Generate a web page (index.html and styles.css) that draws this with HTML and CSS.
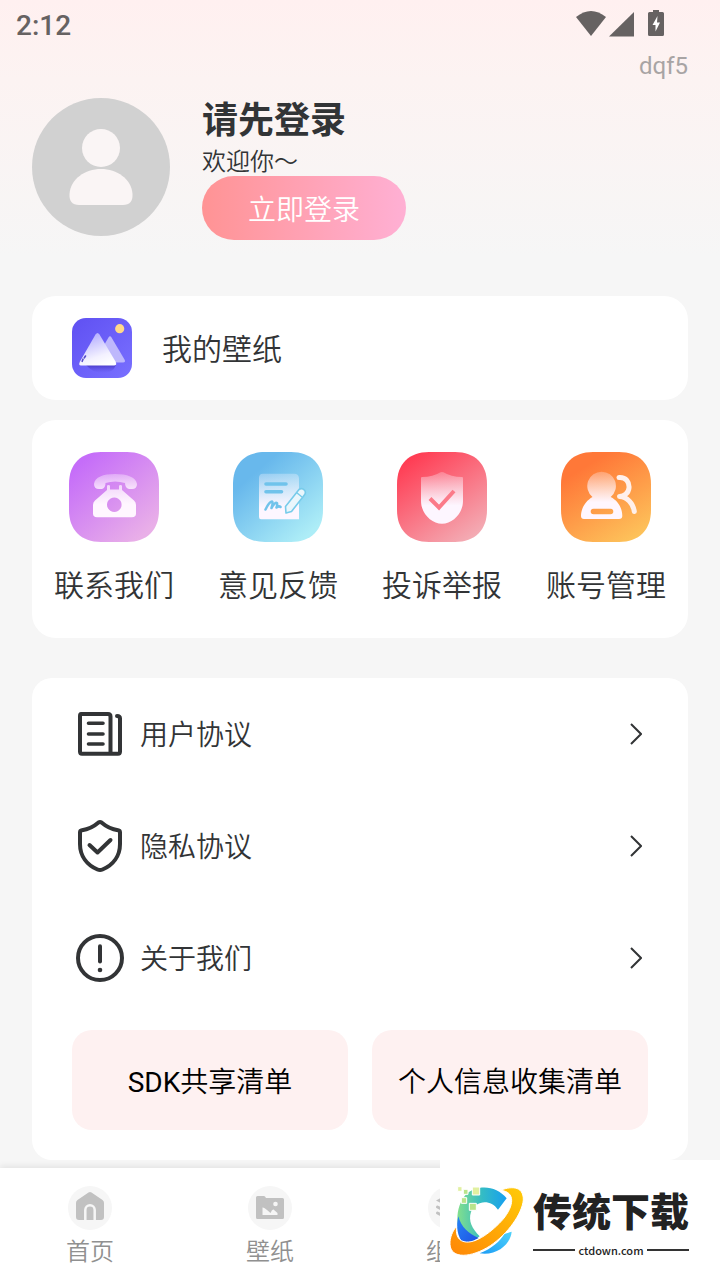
FILE: index.html
```html
<!DOCTYPE html>
<html lang="zh-CN">
<head>
<meta charset="utf-8">
<meta name="viewport" content="width=device-width, initial-scale=1">
<title>我的</title>
<link rel="stylesheet" href="styles.css">
</head>
<body>
<div class="page">
  <header class="status">
    <span class="clock">2:12</span>
    <svg class="status-icons" viewBox="0 0 92 30" aria-hidden="true" fill="#666262">
      <path d="M0 7Q15-5 30 7L15 26Z"/>
      <path d="M33 26.500L58 2V26.500Z"/>
      <path d="M77 0h6v2h3.500q1.500 0 1.500 1.500v21q0 1.500-1.500 1.500h-13q-1.500 0-1.500-1.500v-21Q72 2 73.500 2H77Z"/>
      <path fill="#fff" d="M81.500 6L76.500 15H79.500V21.500L84 12.500H81Z"/>
    </svg>
  </header>
  <p class="user-code">dqf5</p>

  <section class="profile">
    <svg class="avatar" viewBox="0 0 138 138" role="img" aria-label="头像">
      <circle cx="69" cy="69" r="69" fill="#d1d1d1"/>
      <circle cx="69" cy="50" r="19" fill="#faf5f5"/>
      <path fill="#faf5f5" d="M37.500 96C38.500 81 53 71 69 71S99.500 81 100.500 96Q101 107 91 107H47Q37 107 37.500 96Z"/>
    </svg>
    <div class="profile-text">
      <h1 class="profile-title">请先登录</h1>
      <p class="profile-sub">欢迎你～</p>
      <button class="login" type="button">立即登录</button>
    </div>
  </section>

  <main class="content">
    <a class="card wallpaper" href="#wallpaper">
      <svg class="wallpaper-icon" viewBox="0 0 60 60" aria-hidden="true">
        <defs>
          <linearGradient id="wp-bg" x1="0" y1="0" x2="1" y2="1"><stop offset="0" stop-color="#5f50f2"/><stop offset="1" stop-color="#7970ff"/></linearGradient>
          <linearGradient id="wp-big" x1="0.300" y1="0" x2="0.700" y2="1"><stop offset="0" stop-color="#b0a9ff"/><stop offset="0.700" stop-color="#f3f1ff"/><stop offset="1" stop-color="#fff"/></linearGradient>
          <linearGradient id="wp-shade" x1="0" y1="0" x2="0" y2="1"><stop offset="0" stop-color="#3929b5" stop-opacity="0.700"/><stop offset="1" stop-color="#5a4ddc" stop-opacity="0"/></linearGradient>
        </defs>
        <rect width="60" height="60" rx="14" fill="url(#wp-bg)"/>
        <path d="M14 47H44Q41 55 31 55T14 47Z" fill="url(#wp-shade)"/>
        <path d="M36.500 19.500Q38 17 39.500 19.500L52.500 41.500Q54 44.500 51 44.500H26Q22 44.500 24 41Z" fill="#beb8fc"/>
        <path d="M23.500 16.500Q25.500 13.500 27.500 16.500L43.500 43.500Q45.500 47.500 42 47.500H9Q6 47.500 8 43.500Z" fill="url(#wp-big)"/>
        <path d="M10.200 43.300L11 41.200M12.300 39.800L13.500 38" stroke="#5549c8" stroke-width="1.600" stroke-linecap="round"/>
        <circle cx="47.700" cy="10.700" r="4.600" fill="#ffd98a"/>
      </svg>
      <span class="wallpaper-label">我的壁纸</span>
    </a>

    <nav class="card shortcuts" aria-label="服务">
      <a class="shortcut" href="#contact">
        <svg class="shortcut-icon" viewBox="0 0 90 90" aria-hidden="true">
          <defs>
            <linearGradient id="c-bg" x1="0.150" y1="0.100" x2="0.850" y2="0.900"><stop offset="0" stop-color="#c56df9"/><stop offset="1" stop-color="#e9afe8"/></linearGradient>
            <linearGradient id="c-top" x1="0" y1="0" x2="0" y2="1"><stop offset="0" stop-color="#fff6ff" stop-opacity="0.350"/><stop offset="1" stop-color="#fff6ff" stop-opacity="0.800"/></linearGradient>
            <linearGradient id="c-body" x1="0" y1="0" x2="0" y2="1"><stop offset="0" stop-color="#fff6ff" stop-opacity="0.700"/><stop offset="0.600" stop-color="#fff6ff"/></linearGradient>
          </defs>
          <path fill="url(#c-bg)" d="M32 0H58C78 0 90 12 90 32V58C90 78 78 90 58 90H32C12 90 0 78 0 58V32C0 12 12 0 32 0Z"/>
          <path fill="url(#c-top)" d="M46 22C58 22 67 25 68 32Q68 37 63 37H60Q56 36 56 31Q46 28 36.500 31Q36.500 36 33 37H30Q25 37 25 32C26 25 34 22 46 22Z"/>
          <path fill="url(#c-body)" fill-rule="evenodd" d="M38 34Q38 33 39.500 33T41 34V37.500H50V34Q50 33 51.500 33T53 34V38L65 48.500Q67 50 67 53V61.500Q67 65.300 63 65.300H28Q24 65.300 24 61.500V53Q24 50 26 48.500L38 38ZM45.300 45.400a7.300 7.300 0 1 0 .01 0Z"/>
        </svg>
        <span>联系我们</span>
      </a>
      <a class="shortcut" href="#feedback">
        <svg class="shortcut-icon" viewBox="0 0 90 90" aria-hidden="true">
          <defs>
            <linearGradient id="f-bg" x1="0.150" y1="0.100" x2="0.850" y2="0.900"><stop offset="0.150" stop-color="#68b8ec"/><stop offset="1" stop-color="#adedf7"/></linearGradient>
            <linearGradient id="f-paper" x1="0" y1="0" x2="0" y2="1"><stop offset="0" stop-color="#fdf6ff" stop-opacity="0.300"/><stop offset="0.750" stop-color="#fdf6ff"/></linearGradient>
          </defs>
          <path fill="url(#f-bg)" d="M32 0H58C78 0 90 12 90 32V58C90 78 78 90 58 90H32C12 90 0 78 0 58V32C0 12 12 0 32 0Z"/>
          <path fill="url(#f-paper)" d="M30 21.700H61Q66 21.700 66 26.500V67.200H28Q26 67.200 26 65V26Q26 21.700 30 21.700Z"/>
          <g fill="none" stroke="#70c3eb" stroke-linecap="round" stroke-linejoin="round">
            <path stroke-width="3.600" d="M33 32H53M33 39.700H48.500"/>
            <path stroke-width="2.500" d="M32.500 57.500Q36 50 39 49.500Q40.500 50 38.500 56Q42 50 44 51Q44.500 53 43.500 55.500Q46 53.500 47.500 55"/>
          </g>
          <path fill="#eaf6fc" stroke="#77cbea" stroke-width="1.600" stroke-linejoin="round" d="M52.500 54.500L66 37.500Q69 35.500 71.500 38.200Q73.500 40.500 71 43.500L58.500 59.500L53 61Z"/>
          <path fill="none" stroke="#77cbea" stroke-width="1.400" d="M63.500 40.500L69 45"/>
        </svg>
        <span>意见反馈</span>
      </a>
      <a class="shortcut" href="#report">
        <svg class="shortcut-icon" viewBox="0 0 90 90" aria-hidden="true">
          <defs>
            <linearGradient id="r-bg" x1="0.150" y1="0" x2="0.850" y2="1"><stop offset="0.050" stop-color="#ff3d54"/><stop offset="1" stop-color="#f3b0b8"/></linearGradient>
            <linearGradient id="r-shield" x1="0" y1="0" x2="0" y2="1"><stop offset="0" stop-color="#fdf4ff" stop-opacity="0.250"/><stop offset="0.650" stop-color="#fdf6ff"/></linearGradient>
          </defs>
          <path fill="url(#r-bg)" d="M32 0H58C78 0 90 12 90 32V58C90 78 78 90 58 90H32C12 90 0 78 0 58V32C0 12 12 0 32 0Z"/>
          <path fill="url(#r-shield)" d="M43.500 20.300Q45 19.500 46.500 20.300Q54 25 65 25Q66 25 66 26V49C66 61 56 71.700 45 71.700S24 61 24 49V26Q24 25 25 25Q36 25 43.500 20.300Z"/>
          <path fill="none" stroke="#fb7a89" stroke-width="4" d="M33 46.500L42 55.500L57 39"/>
        </svg>
        <span>投诉举报</span>
      </a>
      <a class="shortcut" href="#account">
        <svg class="shortcut-icon" viewBox="0 0 90 90" aria-hidden="true">
          <defs>
            <linearGradient id="a-bg" x1="0.200" y1="0" x2="0.800" y2="1"><stop offset="0.150" stop-color="#ff7838"/><stop offset="1" stop-color="#fdc45b"/></linearGradient>
            <linearGradient id="a-body" gradientUnits="userSpaceOnUse" x1="40" y1="19" x2="40" y2="67"><stop offset="0" stop-color="#fff5ff" stop-opacity="0.250"/><stop offset="0.650" stop-color="#fff6ff"/></linearGradient>
          </defs>
          <path fill="url(#a-bg)" d="M32 0H58C78 0 90 12 90 32V58C90 78 78 90 58 90H32C12 90 0 78 0 58V32C0 12 12 0 32 0Z"/>
          <path fill="url(#a-body)" fill-rule="evenodd" d="M40.700 19.700a14.200 14.200 0 0 1 9 25.200C57 48.500 61.300 56 61.300 64Q61.300 67 58 67H23Q20 67 20 64C20 56 25 48.500 31.500 44.900A14.200 14.200 0 0 1 40.700 19.700ZM32.500 56.700a2.800 2.800 0 0 0 0 5.600H49.500a2.800 2.800 0 0 0 0-5.600Z"/>
          <path fill="none" stroke="#fff0eb" stroke-width="5" stroke-linecap="round" stroke-linejoin="round" d="M58 25.500C65 25 68.500 30 68 36C67.500 41 63 44.500 58.500 44.500C66 45 72 51 73.300 59.500"/>
        </svg>
        <span>账号管理</span>
      </a>
    </nav>

    <section class="card settings">
      <a class="row" href="#terms">
        <svg class="row-icon" viewBox="0 0 48 48" aria-hidden="true">
          <g fill="none" stroke="#323436" stroke-width="4" stroke-linecap="round" stroke-linejoin="round">
            <path d="M5 4H32Q34.500 4 34.500 6.500V43.700H6Q4 43.700 4 41.500V6Q4 4 5 4ZM34.500 43.700H42Q44 43.700 44 41.500V8.500Q44 6 41 6"/>
            <path stroke-width="3.600" d="M12.500 13.300H27M12.500 24H27M12.500 34H27"/>
          </g>
        </svg>
        <span class="row-label">用户协议</span>
        <svg class="chevron" viewBox="0 0 12 22" aria-hidden="true"><path d="M1 1L11 11L1 21"/></svg>
      </a>
      <a class="row" href="#privacy">
        <svg class="row-icon row-icon-tall" viewBox="0 0 48 56" aria-hidden="true">
          <g fill="none" stroke="#323436" stroke-width="4" stroke-linecap="round" stroke-linejoin="round">
            <path d="M22.500 4.500Q24 3.500 25.500 4.500Q33 11 42 12.200Q44 12.500 44 14.500V26C44 38 37 47 26.500 51.500Q24 52.600 21.500 51.500C11 47 4 38 4 26V14.500Q4 12.500 6 12.200Q15 11 22.500 4.500Z"/>
            <path d="M13.500 27L21.500 34.500L34.500 22"/>
          </g>
        </svg>
        <span class="row-label">隐私协议</span>
        <svg class="chevron" viewBox="0 0 12 22" aria-hidden="true"><path d="M1 1L11 11L1 21"/></svg>
      </a>
      <a class="row" href="#about">
        <svg class="row-icon" viewBox="0 0 48 48" aria-hidden="true">
          <circle cx="24" cy="24" r="22" fill="none" stroke="#323436" stroke-width="4"/>
          <path stroke="#323436" stroke-width="4" stroke-linecap="round" d="M24 12.300V27.500"/>
          <circle cx="24" cy="36" r="2.300" fill="#323436"/>
        </svg>
        <span class="row-label">关于我们</span>
        <svg class="chevron" viewBox="0 0 12 22" aria-hidden="true"><path d="M1 1L11 11L1 21"/></svg>
      </a>
      <div class="lists">
        <button class="list-button" type="button"><span class="latin">SDK</span>共享清单</button>
        <button class="list-button" type="button">个人信息收集清单</button>
      </div>
    </section>
  </main>

  <nav class="tabs" aria-label="主导航">
    <a class="tab" href="#home">
      <svg class="tab-icon" viewBox="0 0 44 44" aria-hidden="true">
        <circle cx="22" cy="22" r="22" fill="#f6f6f6"/>
        <path fill="#c1c1c1" d="M20.500 6.600Q22 5.600 23.500 6.600L34.500 14Q36 15 36 17V31Q36 34 33 34H11Q8 34 8 31V17Q8 15 9.500 14Z"/>
        <path fill="none" stroke="#f6f6f6" stroke-width="2.500" d="M17.300 34V24a4.700 4.700 0 0 1 9.400 0V34"/>
      </svg>
      <span>首页</span>
    </a>
    <a class="tab" href="#wallpapers">
      <svg class="tab-icon" viewBox="0 0 44 44" aria-hidden="true">
        <circle cx="22" cy="22" r="22" fill="#f6f6f6"/>
        <path fill="#c1c1c1" d="M9.500 10H16Q17 10 18 12H34.500Q36 12 36 13.500V31.500Q36 33 34.500 33H9.500Q8 33 8 31.500V11.500Q8 10 9.500 10Z"/>
        <circle cx="27.500" cy="18" r="2.300" fill="#f6f6f6"/>
        <path fill="#f6f6f6" d="M14.500 21.500Q16 21 19 24L22.500 27Q24 23 25.500 23.500L29.500 27V29H14.500Z"/>
      </svg>
      <span>壁纸</span>
    </a>
    <a class="tab" href="#widgets">
      <svg class="tab-icon" viewBox="0 0 44 44" aria-hidden="true">
        <circle cx="22" cy="22" r="22" fill="#f6f6f6"/>
        <path fill="#c1c1c1" d="M22 7L36 14.500L22 22L8 14.500Z"/>
        <path fill="none" stroke="#c1c1c1" stroke-width="3" stroke-linecap="round" d="M9.500 21L22 27.500L34.500 21M9.500 27L22 33.500L34.500 27"/>
      </svg>
      <span>组件</span>
    </a>
  </nav>

  <aside class="brand">
    <svg class="brand-mark" viewBox="24 24 228 216" aria-hidden="true">
      <defs>
        <linearGradient id="b-c" x1="0" y1="0" x2="1" y2="0"><stop offset="0" stop-color="#83df8c"/><stop offset="0.500" stop-color="#34bcc4"/><stop offset="1" stop-color="#169ff0"/></linearGradient>
        <linearGradient id="b-blue" x1="0" y1="0" x2="1" y2="1"><stop offset="0" stop-color="#2683f5"/><stop offset="1" stop-color="#1d4fe2"/></linearGradient>
        <linearGradient id="b-cyan" x1="0" y1="1" x2="1" y2="0"><stop offset="0" stop-color="#1c9cf5"/><stop offset="1" stop-color="#4fd2fa"/></linearGradient>
        <linearGradient id="b-ring" x1="0" y1="1" x2="1" y2="0"><stop offset="0" stop-color="#ff8606"/><stop offset="1" stop-color="#ffcb08"/></linearGradient>
      </defs>
      <path fill="url(#b-c)" d="M200 67L174 101C150 66 105 75 93 108C84 135 97 158 119 181L86 204C40 166 45 92 77 56C111 24 169 27 200 67Z"/>
      <path fill="url(#b-blue)" d="M55 121C63 153 86 173 116 186L73 207C50 180 48 150 55 121Z"/>
      <path fill="url(#b-cyan)" d="M215 167C211 206 170 240 119 232C154 219 182 194 193 174Z"/>
      <path fill="url(#b-ring)" stroke="#fff" stroke-width="3" d="M181 43C208 32 251 26 250 72C246 113 205 172 151 209C94 246 32 250 30 205C29 185 38 164 50 151C47 171 51 192 72 197C107 206 159 164 189 130C222 90 228 47 181 43Z"/>
      <g stroke="#fff" stroke-width="3">
        <path fill="#e1f0a0" d="M53 32H66V46H53ZM97 33H119V57H97Z"/>
        <path fill="#b9e48b" d="M70 40H84V55H70ZM64 65H80V82H64ZM88 82H109V103H88Z"/>
      </g>
    </svg>
    <div class="brand-text">
      <strong class="brand-name">传统下载</strong>
      <span class="brand-site">ctdown.com</span>
    </div>
  </aside>
</div>
</body>
</html>
```
FILE: styles.css
```css
* {
  box-sizing: border-box;
}

body {
  margin: 0;
  background: #f6f6f6;
  color: #323436;
  font-family: Roboto, "Noto Sans CJK SC", sans-serif;
  font-weight: 350;
}

h1,
p {
  margin: 0;
}

a {
  color: inherit;
  text-decoration: none;
}

button {
  border: 0;
  padding: 0;
  font: inherit;
}

svg {
  display: block;
  flex: none;
}

.page {
  position: relative;
  display: flex;
  flex-direction: column;
  min-height: 100vh;
  background: linear-gradient(#fff0f0, #fcf3f2 80px, #f6f6f6 256px);
}

.status {
  display: flex;
  align-items: center;
  justify-content: space-between;
  height: 50px;
  padding: 0 52px 0 16px;
}

.clock {
  color: #666262;
  font-size: 28px;
  font-weight: 500;
}

.status-icons {
  width: 92px;
  height: 30px;
}

.user-code {
  padding: 0 32px;
  color: #a8a4a4;
  font-size: 24px;
  font-weight: 400;
  line-height: 32px;
  text-align: right;
}

.profile {
  display: flex;
  align-items: center;
  gap: 32px;
  padding: 12px 32px 0;
}

.avatar {
  width: 138px;
  height: 138px;
}

.profile-title {
  font-size: 36px;
  font-weight: 700;
  line-height: 54px;
}

.profile-sub {
  font-size: 24px;
  line-height: 28px;
}

.login {
  display: block;
  width: 204px;
  height: 64px;
  border-radius: 32px;
  background: linear-gradient(90deg, #ff9394, #ffb0d4);
  color: #fff;
  font-size: 28px;
}

.content {
  padding: 56px 32px 8px;
}

.card {
  border-radius: 24px;
  background: #fff;
}

.wallpaper {
  display: flex;
  align-items: center;
  gap: 30px;
  height: 104px;
  padding: 0 40px;
  font-size: 30px;
}

.wallpaper-label,
.row-label {
  padding-bottom: 2px;
}

.wallpaper-icon {
  width: 60px;
  height: 60px;
}

.shortcuts {
  display: grid;
  grid-template-columns: repeat(4, 1fr);
  margin-top: 20px;
  padding: 32px 0 30px;
}

.shortcut {
  display: flex;
  flex-direction: column;
  align-items: center;
  gap: 22px;
  font-size: 30px;
  line-height: 44px;
}

.shortcut-icon {
  width: 90px;
  height: 90px;
}

.settings {
  margin-top: 40px;
  padding: 0 40px 30px;
  border-radius: 20px;
}

.row {
  display: flex;
  align-items: center;
  gap: 16px;
  height: 112px;
  padding: 0 6px 0 4px;
  font-size: 28px;
}

.row-icon {
  width: 48px;
  height: 48px;
}

.row-icon-tall {
  height: 56px;
}

.row-label {
  flex: 1;
}

.chevron {
  width: 12px;
  height: 22px;
  fill: none;
  stroke: #323436;
  stroke-width: 2;
}

.lists {
  display: grid;
  grid-template-columns: 1fr 1fr;
  gap: 24px;
  margin-top: 16px;
}

.list-button {
  height: 100px;
  border-radius: 20px;
  background: #fef1f1;
  color: #000;
  font-size: 28px;
}

.latin {
  font-weight: 400;
}

.tabs {
  display: grid;
  grid-template-columns: repeat(4, 1fr);
  margin-top: auto;
  padding: 18px 0 10px;
  background: #fff;
  box-shadow: 0 -2px 6px rgba(0, 0, 0, 0.08);
}

.tab {
  display: flex;
  flex-direction: column;
  align-items: center;
  gap: 4px;
  color: #909090;
  font-size: 24px;
  line-height: 36px;
}

.tab-icon {
  width: 44px;
  height: 44px;
}

.brand {
  position: absolute;
  right: 0;
  bottom: 0;
  display: flex;
  align-items: center;
  gap: 9px;
  width: 280px;
  height: 120px;
  padding-left: 8px;
  background: #fff;
}

.brand-mark {
  width: 76px;
  height: 72px;
}

.brand-text {
  width: 156px;
  padding-top: 10px;
  color: #222;
}

.brand-name {
  display: block;
  font-size: 39px;
  font-weight: 900;
  line-height: 50px;
}

.brand-site {
  display: flex;
  align-items: center;
  gap: 3px;
  font-family: "Noto Sans CJK SC", sans-serif;
  font-size: 11px;
  font-weight: 500;
  line-height: 24px;
}

.brand-site::before,
.brand-site::after {
  content: "";
  flex: 1;
  height: 2px;
  background: #333;
}
```
